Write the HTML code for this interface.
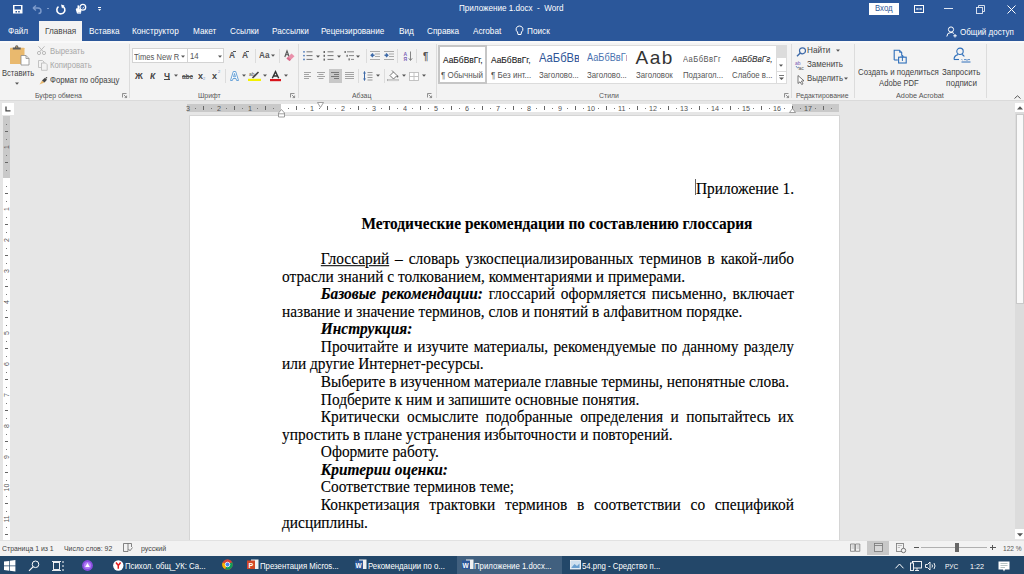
<!DOCTYPE html>
<html><head><meta charset="utf-8">
<style>
*{margin:0;padding:0;box-sizing:border-box}
html,body{width:1024px;height:574px;overflow:hidden;background:#e6e6e6;font-family:"Liberation Sans",sans-serif}
.a{position:absolute}
.t{position:absolute;white-space:pre;line-height:1}
.ln{position:absolute;left:282px;width:512px;font-family:"Liberation Serif",serif;font-size:15.4px;color:#000;-webkit-text-stroke:0.12px #000;white-space:nowrap;line-height:17.57px;height:17.57px;transform:scaleY(1.04);transform-origin:50% 60%}
.j{text-align:justify;text-align-last:justify}
svg{overflow:visible}
</style></head><body>

<div class="a" style="left:0px;top:0px;width:1024px;height:41px;background:#2b579a;"></div>
<svg class="a" style="left:12px;top:4px" width="12" height="11" viewBox="0 0 12 11"><rect x="1" y="1" width="9.5" height="8.5" fill="#fff"/><rect x="2.5" y="2" width="6.5" height="3.5" fill="#2b579a"/><rect x="3.5" y="7" width="1.5" height="1.5" fill="#2b579a"/><rect x="6.2" y="7" width="1.5" height="1.5" fill="#2b579a"/></svg>
<svg class="a" style="left:31px;top:4px" width="12" height="11" viewBox="0 0 12 11"><path d="M2 4 L5 1.5 M2 4 L5 6.5 M2 4 H7 Q10 4 10 7 Q10 9.5 7.5 9.5" stroke="#7d9bcb" stroke-width="1.4" fill="none"/></svg>
<div class="a" style="left:46.5px;top:8px;width:2px;height:1px;background:#7d9bcb;"></div>
<svg class="a" style="left:55px;top:4px" width="12" height="11" viewBox="0 0 12 11"><path d="M7.5 2.2 A4 4 0 1 1 3.5 2.6" stroke="#fff" stroke-width="1.6" fill="none"/><path d="M6 0.5 L9.5 1.5 L7 4.5 Z" fill="#fff"/></svg>
<svg class="a" style="left:75px;top:3px" width="12" height="12" viewBox="0 0 12 12"><circle cx="7.8" cy="4.3" r="2.9" fill="none" stroke="#fff" stroke-width="1.3"/><path d="M7 4.6 L7.8 5.4 L9.2 3.6" stroke="#fff" stroke-width="0.7" fill="none"/><path d="M0.8 6.5 Q0.8 5 2.5 5.3 L2.5 2.6 Q3.5 1.8 4.2 2.8 V6 L5.5 6.3 Q6.5 6.8 6.3 8 L6 10.5 H2 Z" fill="#fff"/><rect x="2.8" y="9" width="3" height="1.5" fill="#c9d5ea"/></svg>
<div class="a" style="left:98px;top:7px;width:3.2px;height:0.9px;background:#fff;"></div>
<svg class="a" style="left:98px;top:8.5px" width="3.2" height="2" viewBox="0 0 3.2 2"><path d="M0 0 H3.2 L1.6 2 Z" fill="#fff"/></svg>
<div class="t" style="left:459.0px;top:3.96px;font-size:8.91px;color:#fff;transform:scaleX(0.9091);transform-origin:0 0;">Приложение 1.docx  -  Word</div>
<div class="a" style="left:869px;top:2.5px;width:30px;height:12px;background:#fff;"></div>
<div class="t" style="left:875.0px;top:4.44px;font-size:8.58px;color:#2b579a;transform:scaleX(0.9091);transform-origin:0 0;">Вход</div>
<svg class="a" style="left:914px;top:5px" width="10" height="8" viewBox="0 0 10 8"><rect x="0.5" y="0.5" width="9" height="7" fill="none" stroke="#fff"/><path d="M2.5 4 H7.5 M3.5 3 L2.5 4 L3.5 5 M6.5 3 L7.5 4 L6.5 5" stroke="#fff" stroke-width="0.8" fill="none"/></svg>
<div class="a" style="left:944px;top:8px;width:9px;height:1px;background:#dfe6f2;"></div>
<svg class="a" style="left:976px;top:4.5px" width="9" height="9" viewBox="0 0 9 9"><rect x="0.5" y="2.5" width="6" height="6" fill="none" stroke="#e6ecf5" stroke-width="0.9"/><path d="M2.5 2.5 V0.5 H8.5 V6.5 H6.5" fill="none" stroke="#e6ecf5" stroke-width="0.9"/></svg>
<svg class="a" style="left:1007px;top:4.5px" width="9" height="9" viewBox="0 0 9 9"><path d="M0.5 0.5 L8.5 8.5 M8.5 0.5 L0.5 8.5" stroke="#fff" stroke-width="1"/></svg>
<div class="a" style="left:38.6px;top:21px;width:43.2px;height:20px;background:#f3f3f3;"></div>
<div class="t" style="left:7.8px;top:26.66px;font-size:9.02px;color:#fff;transform:scaleX(0.9091);transform-origin:0 0;">Файл</div>
<div class="t" style="left:89.0px;top:26.66px;font-size:9.02px;color:#fff;transform:scaleX(0.9091);transform-origin:0 0;">Вставка</div>
<div class="t" style="left:132.0px;top:26.66px;font-size:9.02px;color:#fff;transform:scaleX(0.9091);transform-origin:0 0;">Конструктор</div>
<div class="t" style="left:193.0px;top:26.66px;font-size:9.02px;color:#fff;transform:scaleX(0.9091);transform-origin:0 0;">Макет</div>
<div class="t" style="left:229.5px;top:26.66px;font-size:9.02px;color:#fff;transform:scaleX(0.9091);transform-origin:0 0;">Ссылки</div>
<div class="t" style="left:271.8px;top:26.66px;font-size:9.02px;color:#fff;transform:scaleX(0.9091);transform-origin:0 0;">Рассылки</div>
<div class="t" style="left:321.0px;top:26.66px;font-size:9.02px;color:#fff;transform:scaleX(0.9091);transform-origin:0 0;">Рецензирование</div>
<div class="t" style="left:399.0px;top:26.66px;font-size:9.02px;color:#fff;transform:scaleX(0.9091);transform-origin:0 0;">Вид</div>
<div class="t" style="left:427.0px;top:26.66px;font-size:9.02px;color:#fff;transform:scaleX(0.9091);transform-origin:0 0;">Справка</div>
<div class="t" style="left:472.5px;top:26.66px;font-size:9.02px;color:#fff;transform:scaleX(0.9091);transform-origin:0 0;">Acrobat</div>
<div class="t" style="left:527.0px;top:26.66px;font-size:9.02px;color:#fff;transform:scaleX(0.9091);transform-origin:0 0;">Поиск</div>
<div class="t" style="left:45.0px;top:26.66px;font-size:9.02px;color:#444;transform:scaleX(0.9091);transform-origin:0 0;">Главная</div>
<svg class="a" style="left:515px;top:25px" width="9" height="11" viewBox="0 0 9 11"><path d="M4.5 1 A3.3 3.3 0 0 1 6.5 7 L6 9.5 H3 L2.5 7 A3.3 3.3 0 0 1 4.5 1 Z" fill="none" stroke="#fff" stroke-width="1"/></svg>
<svg class="a" style="left:946px;top:26px" width="12" height="12" viewBox="0 0 12 12"><circle cx="5" cy="3.5" r="2.6" fill="none" stroke="#fff"/><path d="M0.8 10.5 Q1 6.5 5 6.5 Q7 6.5 8 7.5" fill="none" stroke="#fff"/><path d="M9 8 V11.5 M7.3 9.8 H10.8" stroke="#fff"/></svg>
<div class="t" style="left:960.0px;top:28.05px;font-size:8.80px;color:#fff;transform:scaleX(0.9091);transform-origin:0 0;">Общий доступ</div>
<div class="a" style="left:0px;top:41px;width:1024px;height:60px;background:#f3f3f3;"></div>
<div class="a" style="left:0px;top:41px;width:1024px;height:1.5px;background:#f9f9f9;"></div>
<div class="a" style="left:0px;top:100px;width:1024px;height:1px;background:#dadada;"></div>
<svg class="a" style="left:9px;top:45px" width="21" height="21" viewBox="0 0 21 21"><rect x="1" y="2.7" width="14.5" height="16.3" rx="0.6" fill="#e9b96e"/><path d="M3.8 4.6 V2.6 H6 Q6.2 0.3 7.75 0.3 Q9.3 0.3 9.5 2.6 H11.7 V4.6 Z" fill="#5a5a5a"/><circle cx="7.75" cy="1.9" r="0.7" fill="#e9b96e"/><path d="M12 10.5 H17 L20 13.5 V20 H12 Z" fill="#fff" stroke="#8a8a8a" stroke-width="0.8"/><path d="M17 10.5 V13.5 H20" fill="none" stroke="#8a8a8a" stroke-width="0.8"/></svg>
<div class="t" style="left:1.6px;top:68.82px;font-size:8.36px;color:#444;transform:scaleX(0.9091);transform-origin:0 0;">Вставить</div>
<svg class="a" style="left:14.7px;top:81.8px" width="4" height="3" viewBox="0 0 4 3"><path d="M0 0.5 H4 L2 2.7 Z" fill="#555"/></svg>
<svg class="a" style="left:37px;top:45.5px" width="9" height="9" viewBox="0 0 9 9"><circle cx="2" cy="7" r="1.6" fill="none" stroke="#b4b4b4" stroke-width="0.9"/><circle cx="7" cy="7" r="1.6" fill="none" stroke="#b4b4b4" stroke-width="0.9"/><path d="M2.8 5.6 L7.5 0.3 M6.2 5.6 L1.5 0.3" stroke="#b4b4b4" stroke-width="0.9"/></svg>
<div class="t" style="left:49.7px;top:47.08px;font-size:8.53px;color:#a8a8a8;transform:scaleX(0.9091);transform-origin:0 0;">Вырезать</div>
<svg class="a" style="left:37.5px;top:60px" width="10" height="11" viewBox="0 0 10 11"><path d="M0.5 0.5 H4.5 L6 2 V7.5 H0.5 Z" fill="none" stroke="#bdbdbd" stroke-width="0.9"/><path d="M3.5 3 H7.5 L9.2 4.7 V10.3 H3.5 Z" fill="#f3f3f3" stroke="#bdbdbd" stroke-width="0.9"/></svg>
<div class="t" style="left:49.7px;top:61.38px;font-size:8.53px;color:#a8a8a8;transform:scaleX(0.9091);transform-origin:0 0;">Копировать</div>
<svg class="a" style="left:38.5px;top:76.5px" width="9" height="8" viewBox="0 0 9 8"><path d="M0.5 7.5 L3 3.5 L5.5 5.5 Z" fill="#e9b96e"/><path d="M3 3.5 L6 0.8 L8 2.8 L5.5 5.5 Z" fill="#444"/><circle cx="7.5" cy="0.8" r="0.8" fill="#444"/></svg>
<div class="t" style="left:49.5px;top:76.28px;font-size:8.53px;color:#444;transform:scaleX(0.9091);transform-origin:0 0;">Формат по образцу</div>
<div class="t" style="left:34.9px;top:91.58px;font-size:7.59px;color:#555;transform:scaleX(0.9091);transform-origin:0 0;">Буфер обмена</div>
<svg class="a" style="left:121.5px;top:92.5px" width="5" height="5" viewBox="0 0 5 5"><path d="M0.5 4.5 V0.5 H4.5" stroke="#777" stroke-width="0.8" fill="none"/><path d="M1.8 1.8 L4.6 4.6 M4.6 2.6 V4.6 H2.6" stroke="#777" stroke-width="0.8" fill="none"/></svg>
<div class="a" style="left:129.3px;top:44px;width:1px;height:54px;background:#dcdcdc;"></div>
<div class="a" style="left:131.7px;top:48.4px;width:92px;height:14.6px;background:#fff;border:1px solid #d3d3d3"></div>
<div class="a" style="left:187.1px;top:48.4px;width:1px;height:14.6px;background:#d3d3d3;"></div>
<div class="t" style="left:134.0px;top:52.52px;font-size:8.36px;color:#555;transform:scaleX(0.9091);transform-origin:0 0;">Times New R</div>
<svg class="a" style="left:181.2px;top:54.8px" width="4" height="3" viewBox="0 0 4 3"><path d="M0 0.5 H4 L2 2.7 Z" fill="#555"/></svg>
<div class="t" style="left:190.0px;top:52.34px;font-size:8.58px;color:#555;transform:scaleX(0.9091);transform-origin:0 0;">14</div>
<svg class="a" style="left:217.6px;top:54.8px" width="4" height="3" viewBox="0 0 4 3"><path d="M0 0.5 H4 L2 2.7 Z" fill="#555"/></svg>
<div class="t" style="left:228.5px;top:51.28px;font-size:9.24px;color:#555;transform:scaleX(0.9091);transform-origin:0 0;font-weight:bold">A</div>
<div class="a" style="left:233px;top:51px;width:2.5px;height:0.9px;background:#555;"></div>
<div class="t" style="left:241.5px;top:51.28px;font-size:9.24px;color:#555;transform:scaleX(0.9091);transform-origin:0 0;font-weight:bold">A</div>
<div class="a" style="left:246px;top:51px;width:2.5px;height:0.9px;background:#555;"></div>
<div class="a" style="left:254.6px;top:49px;width:1px;height:14px;background:#dcdcdc;"></div>
<div class="t" style="left:259.2px;top:51.46px;font-size:9.02px;color:#555;transform:scaleX(0.9091);transform-origin:0 0;font-weight:bold">Aa</div>
<svg class="a" style="left:270.5px;top:54.2px" width="4" height="3" viewBox="0 0 4 3"><path d="M0 0.5 H4 L2 2.7 Z" fill="#555"/></svg>
<div class="a" style="left:279.1px;top:49px;width:1px;height:14px;background:#dcdcdc;"></div>
<svg class="a" style="left:284px;top:49.5px" width="11" height="11" viewBox="0 0 11 11"><path d="M0.8 7 L3 0.8 L5.2 7 M1.6 4.8 H4.4" stroke="#555" stroke-width="1.1" fill="none"/><path d="M2.5 8.5 L7.5 3.5 L10.5 6.3 L5.5 11 Z" fill="#e990aa"/><path d="M2.5 8.5 L4 7 L7 9.8 L5.5 11 Z" fill="#d96a8a"/></svg>
<div class="t" style="left:134.8px;top:71.19px;font-size:9.46px;color:#444;transform:scaleX(0.9091);transform-origin:0 0;font-weight:bold">Ж</div>
<div class="t" style="left:149.7px;top:71.19px;font-size:9.46px;color:#444;transform:scaleX(0.9091);transform-origin:0 0;font-weight:bold;font-style:italic">К</div>
<div class="t" style="left:163.6px;top:71.19px;font-size:9.46px;color:#444;transform:scaleX(0.9091);transform-origin:0 0;font-weight:bold">Ч</div>
<div class="a" style="left:163.6px;top:79.3px;width:6px;height:0.9px;background:#444;"></div>
<svg class="a" style="left:174.3px;top:74.2px" width="4" height="3" viewBox="0 0 4 3"><path d="M0 0.5 H4 L2 2.7 Z" fill="#555"/></svg>
<div class="t" style="left:182.2px;top:72.84px;font-size:7.04px;color:#555;transform:scaleX(0.9091);transform-origin:0 0;font-weight:bold">abc</div>
<div class="a" style="left:182px;top:75.5px;width:11px;height:0.9px;background:#555;"></div>
<div class="t" style="left:197.8px;top:70.82px;font-size:9.90px;color:#444;transform:scaleX(0.9091);transform-origin:0 0;font-weight:bold">x</div>
<div class="t" style="left:203.2px;top:77.28px;font-size:4.40px;color:#6a8cc0;transform:scaleX(0.9091);transform-origin:0 0;">2</div>
<div class="t" style="left:211.8px;top:70.82px;font-size:9.90px;color:#444;transform:scaleX(0.9091);transform-origin:0 0;font-weight:bold">x</div>
<div class="t" style="left:217.5px;top:69.78px;font-size:4.40px;color:#6a8cc0;transform:scaleX(0.9091);transform-origin:0 0;">2</div>
<div class="a" style="left:225px;top:69px;width:1px;height:14px;background:#dcdcdc;"></div>
<svg class="a" style="left:229.5px;top:70.5px" width="9" height="10" viewBox="0 0 9 10"><path d="M0.5 9.5 L3.3 0.5 H5.7 L8.5 9.5 H6.6 L6 7.5 H3 L2.4 9.5 Z M3.5 5.8 H5.5 L4.5 2.5 Z" fill="#fff" stroke="#5b9bd5" stroke-width="0.9" stroke-linejoin="round"/></svg>
<svg class="a" style="left:241.6px;top:74.2px" width="4" height="3" viewBox="0 0 4 3"><path d="M0 0.5 H4 L2 2.7 Z" fill="#555"/></svg>
<svg class="a" style="left:248px;top:70.5px" width="14" height="10" viewBox="0 0 14 10"><text x="1" y="5" font-family="Liberation Sans" font-size="5" fill="#555">ab</text><path d="M4.5 7 L10.5 1" stroke="#444" stroke-width="1.6"/><rect x="0" y="7.8" width="13" height="2.2" fill="#f4f100"/></svg>
<svg class="a" style="left:262.7px;top:74.2px" width="4" height="3" viewBox="0 0 4 3"><path d="M0 0.5 H4 L2 2.7 Z" fill="#555"/></svg>
<svg class="a" style="left:270px;top:70.5px" width="12" height="11" viewBox="0 0 12 11"><path d="M2.3 7.2 L5.5 0.7 L8.7 7.2 M3.4 5 H7.6" stroke="#333" stroke-width="1.4" fill="none"/><rect x="0" y="8" width="11" height="2.2" fill="#d8131a"/></svg>
<svg class="a" style="left:283.6px;top:74.2px" width="4" height="3" viewBox="0 0 4 3"><path d="M0 0.5 H4 L2 2.7 Z" fill="#555"/></svg>
<div class="t" style="left:197.6px;top:92.08px;font-size:7.59px;color:#555;transform:scaleX(0.9091);transform-origin:0 0;">Шрифт</div>
<svg class="a" style="left:290px;top:92.5px" width="5" height="5" viewBox="0 0 5 5"><path d="M0.5 4.5 V0.5 H4.5" stroke="#777" stroke-width="0.8" fill="none"/><path d="M1.8 1.8 L4.6 4.6 M4.6 2.6 V4.6 H2.6" stroke="#777" stroke-width="0.8" fill="none"/></svg>
<div class="a" style="left:297.6px;top:44px;width:1px;height:54px;background:#dcdcdc;"></div>
<svg class="a" style="left:302.5px;top:51px" width="11" height="10" viewBox="0 0 11 10"><circle cx="1" cy="0.8" r="0.9" fill="#4a78b8"/><circle cx="1" cy="4.6" r="0.9" fill="#4a78b8"/><circle cx="1" cy="8.4" r="0.9" fill="#4a78b8"/><rect x="3.5" y="0.3" width="6" height="1" fill="#777"/><rect x="3.5" y="4.1" width="6" height="1" fill="#777"/><rect x="3.5" y="7.9" width="6" height="1" fill="#777"/></svg>
<svg class="a" style="left:315.7px;top:54.7px" width="4" height="3" viewBox="0 0 4 3"><path d="M0 0.5 H4 L2 2.7 Z" fill="#555"/></svg>
<svg class="a" style="left:322.5px;top:51px" width="11" height="10" viewBox="0 0 11 10"><rect x="0.5" y="0" width="1.5" height="2" fill="#666"/><rect x="0.5" y="3.8" width="1.5" height="2" fill="#666"/><rect x="0.5" y="7.6" width="1.5" height="2" fill="#666"/><rect x="4.5" y="0.3" width="6" height="1" fill="#777"/><rect x="4.5" y="4.1" width="6" height="1" fill="#777"/><rect x="4.5" y="7.9" width="6" height="1" fill="#777"/></svg>
<svg class="a" style="left:336.6px;top:54.7px" width="4" height="3" viewBox="0 0 4 3"><path d="M0 0.5 H4 L2 2.7 Z" fill="#555"/></svg>
<svg class="a" style="left:344px;top:51px" width="11" height="10" viewBox="0 0 11 10"><rect x="0.5" y="0" width="1.3" height="2" fill="#666"/><rect x="2.5" y="3.8" width="1.3" height="2" fill="#666"/><rect x="4.5" y="7.4" width="1.3" height="2" fill="#666"/><rect x="3" y="0.3" width="7" height="1" fill="#888"/><rect x="5" y="4.1" width="5" height="1" fill="#888"/><rect x="7" y="7.9" width="3" height="1" fill="#888"/></svg>
<svg class="a" style="left:356.4px;top:54.7px" width="4" height="3" viewBox="0 0 4 3"><path d="M0 0.5 H4 L2 2.7 Z" fill="#555"/></svg>
<div class="a" style="left:365.5px;top:49px;width:1px;height:14px;background:#dcdcdc;"></div>
<svg class="a" style="left:369.5px;top:51px" width="10" height="10" viewBox="0 0 10 10"><rect x="0" y="0" width="10" height="1" fill="#aaa"/><rect x="5" y="2.5" width="5" height="1" fill="#aaa"/><rect x="5" y="5" width="5" height="1" fill="#aaa"/><rect x="0" y="8" width="10" height="1" fill="#aaa"/><path d="M4.5 4.2 H1.3 M3 2.5 L1.2 4.2 L3 6" stroke="#3e6aa8" stroke-width="1.4" fill="none"/></svg>
<svg class="a" style="left:383.5px;top:51px" width="10" height="10" viewBox="0 0 10 10"><rect x="0" y="0" width="10" height="1" fill="#aaa"/><rect x="5" y="2.5" width="5" height="1" fill="#aaa"/><rect x="5" y="5" width="5" height="1" fill="#aaa"/><rect x="0" y="8" width="10" height="1" fill="#aaa"/><path d="M0.5 4.2 H3.7 M2 2.5 L3.8 4.2 L2 6" stroke="#3e6aa8" stroke-width="1.4" fill="none"/></svg>
<div class="a" style="left:397.3px;top:49px;width:1px;height:14px;background:#dcdcdc;"></div>
<svg class="a" style="left:402.5px;top:50.5px" width="10" height="11" viewBox="0 0 10 11"><text x="0.5" y="4.8" font-family="Liberation Sans" font-size="5" font-weight="bold" fill="#7a62b5">A</text><text x="0.5" y="9.8" font-family="Liberation Sans" font-size="5" font-weight="bold" fill="#7a62b5">Я</text><path d="M7.5 0.5 V9 M5.8 7.3 L7.5 9.5 L9.2 7.3" stroke="#777" stroke-width="0.9" fill="none"/></svg>
<div class="a" style="left:416.4px;top:49px;width:1px;height:14px;background:#dcdcdc;"></div>
<div class="t" style="left:422.5px;top:51.85px;font-size:10.45px;color:#555;transform:scaleX(0.9091);transform-origin:0 0;font-weight:bold">¶</div>
<div class="a" style="left:328.6px;top:68.5px;width:13.8px;height:14.2px;background:#c8c8c8;"></div>
<svg class="a" style="left:304px;top:72px" width="8" height="7" viewBox="0 0 8 7"><rect x="0" y="0" width="7" height="1" fill="#a3a3a3"/><rect x="0" y="2" width="5" height="1" fill="#a3a3a3"/><rect x="0" y="4" width="7" height="1" fill="#a3a3a3"/><rect x="0" y="6" width="5" height="1" fill="#a3a3a3"/></svg>
<svg class="a" style="left:317px;top:72px" width="8" height="7" viewBox="0 0 8 7"><rect x="0" y="0" width="8" height="1" fill="#a3a3a3"/><rect x="1.5" y="2" width="5" height="1" fill="#a3a3a3"/><rect x="0" y="4" width="8" height="1" fill="#a3a3a3"/><rect x="1.5" y="6" width="5" height="1" fill="#a3a3a3"/></svg>
<svg class="a" style="left:331px;top:72px" width="9" height="7" viewBox="0 0 9 7"><rect x="0" y="0" width="8" height="1" fill="#777"/><rect x="3" y="2" width="5" height="1" fill="#777"/><rect x="0" y="4" width="8" height="1" fill="#777"/><rect x="3" y="6" width="5" height="1" fill="#777"/></svg>
<svg class="a" style="left:345px;top:72px" width="9" height="7" viewBox="0 0 9 7"><rect x="0" y="0" width="9" height="1" fill="#a3a3a3"/><rect x="0" y="2" width="9" height="1" fill="#a3a3a3"/><rect x="0" y="4" width="9" height="1" fill="#a3a3a3"/><rect x="0" y="6" width="9" height="1" fill="#a3a3a3"/></svg>
<div class="a" style="left:358.1px;top:69px;width:1px;height:14px;background:#dcdcdc;"></div>
<svg class="a" style="left:362.5px;top:70.5px" width="10" height="11" viewBox="0 0 10 11"><path d="M1.5 0.5 V9.5" stroke="#3e6aa8" stroke-width="1"/><path d="M0 2.5 L1.5 0.3 L3 2.5 Z M0 7.5 L1.5 9.7 L3 7.5 Z" fill="#3e6aa8"/><rect x="4.5" y="1" width="5" height="1" fill="#999"/><rect x="4.5" y="3.5" width="5" height="1" fill="#999"/><rect x="4.5" y="6" width="5" height="1" fill="#999"/><rect x="4.5" y="8.5" width="5" height="1" fill="#999"/></svg>
<svg class="a" style="left:375.5px;top:74.2px" width="4" height="3" viewBox="0 0 4 3"><path d="M0 0.5 H4 L2 2.7 Z" fill="#555"/></svg>
<div class="a" style="left:383.5px;top:69px;width:1px;height:14px;background:#dcdcdc;"></div>
<svg class="a" style="left:386.5px;top:70px" width="13" height="11" viewBox="0 0 13 11"><path d="M3 5.5 L6.5 2 L10 5.5 L6.5 9 Z" fill="#fff" stroke="#666" stroke-width="0.9"/><path d="M6.5 2 L5 0.5" stroke="#666" stroke-width="0.9"/><circle cx="10.5" cy="6.5" r="0.9" fill="#666"/><rect x="0.5" y="9.5" width="11" height="1.3" fill="#fff" stroke="#999" stroke-width="0.5"/></svg>
<svg class="a" style="left:401.6px;top:74.2px" width="4" height="3" viewBox="0 0 4 3"><path d="M0 0.5 H4 L2 2.7 Z" fill="#555"/></svg>
<svg class="a" style="left:409px;top:71.5px" width="10" height="9" viewBox="0 0 10 9"><rect x="0.5" y="0.5" width="9" height="8" fill="#fff" stroke="#bdbdbd" stroke-width="0.9"/><path d="M5 0.5 V8.5 M0.5 4.5 H9.5" stroke="#bdbdbd" stroke-width="0.9"/></svg>
<svg class="a" style="left:422px;top:74.2px" width="4" height="3" viewBox="0 0 4 3"><path d="M0 0.5 H4 L2 2.7 Z" fill="#555"/></svg>
<div class="t" style="left:351.7px;top:92.08px;font-size:7.59px;color:#555;transform:scaleX(0.9091);transform-origin:0 0;">Абзац</div>
<svg class="a" style="left:427px;top:92.5px" width="5" height="5" viewBox="0 0 5 5"><path d="M0.5 4.5 V0.5 H4.5" stroke="#777" stroke-width="0.8" fill="none"/><path d="M1.8 1.8 L4.6 4.6 M4.6 2.6 V4.6 H2.6" stroke="#777" stroke-width="0.8" fill="none"/></svg>
<div class="a" style="left:436.2px;top:44px;width:1px;height:54px;background:#dcdcdc;"></div>
<div class="a" style="left:437.8px;top:44.9px;width:349px;height:39.2px;background:#fff;border:1px solid #dcdcdc"></div>
<div class="a" style="left:438.3px;top:45.4px;width:48.5px;height:38.2px;background:transparent;border:2px solid #c6c6c6"></div>
<div class="t" style="left:443.0px;top:55.69px;font-size:8.40px;color:#222;-webkit-text-stroke:0.1px #222">АаБбВвГг,</div>
<div class="t" style="left:441.0px;top:70.55px;font-size:8.80px;color:#555;transform:scaleX(0.9091);transform-origin:0 0;">¶ Обычный</div>
<div class="t" style="left:491.0px;top:55.69px;font-size:8.40px;color:#222;-webkit-text-stroke:0.1px #222">АаБбВвГг,</div>
<div class="t" style="left:491.0px;top:70.55px;font-size:8.80px;color:#555;transform:scaleX(0.9091);transform-origin:0 0;">¶ Без инт...</div>
<div class="a" style="left:539px;top:49px;width:39.5px;height:16px;overflow:hidden">
<div class="t" style="left:0.0px;top:3.07px;font-size:12.32px;color:#2e5597;transform:scaleX(0.9091);transform-origin:0 0;">АаБбВвГг</div>
</div>
<div class="t" style="left:539.0px;top:70.74px;font-size:8.58px;color:#555;transform:scaleX(0.9091);transform-origin:0 0;">Заголово...</div>
<div class="a" style="left:587px;top:49px;width:39.5px;height:16px;overflow:hidden">
<div class="t" style="left:0.0px;top:3.93px;font-size:10.12px;color:#4a72b0;transform:scaleX(0.9091);transform-origin:0 0;">АаБбВвГг</div>
</div>
<div class="t" style="left:587.0px;top:70.74px;font-size:8.58px;color:#555;transform:scaleX(0.9091);transform-origin:0 0;">Заголово...</div>
<div class="t" style="left:635.5px;top:48.22px;font-size:19.00px;color:#333;letter-spacing:1.5px">Aab</div>
<div class="t" style="left:636.0px;top:70.74px;font-size:8.58px;color:#555;transform:scaleX(0.9091);transform-origin:0 0;">Заголовок</div>
<div class="a" style="left:683px;top:52px;width:41px;height:12px;overflow:hidden">
<div class="t" style="left:0.0px;top:2.92px;font-size:8.36px;color:#555;transform:scaleX(0.9091);transform-origin:0 0;letter-spacing:0.5px">АаБбВвГг</div>
</div>
<div class="t" style="left:683.0px;top:70.74px;font-size:8.58px;color:#555;transform:scaleX(0.9091);transform-origin:0 0;">Подзагол...</div>
<div class="t" style="left:732.0px;top:55.56px;font-size:8.20px;color:#333;font-style:italic;-webkit-text-stroke:0.1px #333">АаБбВвГг,</div>
<div class="t" style="left:732.0px;top:70.74px;font-size:8.58px;color:#555;transform:scaleX(0.9091);transform-origin:0 0;">Слабое в...</div>
<div class="a" style="left:776.4px;top:44.9px;width:10.2px;height:39.2px;background:#fff;border:1px solid #dcdcdc"></div>
<div class="a" style="left:777.4px;top:45.9px;width:8.2px;height:12.6px;background:#dcdcdc;"></div>
<svg class="a" style="left:779.4px;top:63.5px" width="4" height="3" viewBox="0 0 4 3"><path d="M0 0.5 H4 L2 2.7 Z" fill="#555"/></svg>
<div class="a" style="left:777.4px;top:71px;width:8.2px;height:1px;background:#dcdcdc;"></div>
<svg class="a" style="left:779px;top:74.5px" width="5" height="6" viewBox="0 0 5 6"><path d="M0 0.5 H5" stroke="#555" stroke-width="0.8"/><path d="M0 2.5 H5 L2.5 5 Z" fill="#555"/></svg>
<div class="t" style="left:599.0px;top:91.58px;font-size:7.59px;color:#555;transform:scaleX(0.9091);transform-origin:0 0;">Стили</div>
<svg class="a" style="left:783.5px;top:92.5px" width="5" height="5" viewBox="0 0 5 5"><path d="M0.5 4.5 V0.5 H4.5" stroke="#777" stroke-width="0.8" fill="none"/><path d="M1.8 1.8 L4.6 4.6 M4.6 2.6 V4.6 H2.6" stroke="#777" stroke-width="0.8" fill="none"/></svg>
<div class="a" style="left:790.8px;top:44px;width:1px;height:54px;background:#dcdcdc;"></div>
<svg class="a" style="left:795.5px;top:46.5px" width="11" height="10" viewBox="0 0 11 10"><circle cx="6.5" cy="3.8" r="3" fill="none" stroke="#3e6aa8" stroke-width="1.2"/><path d="M4.3 6 L1 9.3" stroke="#3e6aa8" stroke-width="1.4"/></svg>
<div class="t" style="left:807.0px;top:45.86px;font-size:9.02px;color:#444;transform:scaleX(0.9091);transform-origin:0 0;">Найти</div>
<svg class="a" style="left:835.5px;top:49.0px" width="4" height="3" viewBox="0 0 4 3"><path d="M0 0.5 H4 L2 2.7 Z" fill="#555"/></svg>
<svg class="a" style="left:795px;top:60px" width="12" height="11" viewBox="0 0 12 11"><text x="0" y="4.5" font-family="Liberation Sans" font-size="5" fill="#7a62b5">ab</text><text x="3.5" y="10" font-family="Liberation Sans" font-size="5" fill="#555">ac</text><path d="M1 6 L2.5 8 L4 7" stroke="#3e6aa8" stroke-width="0.7" fill="none"/></svg>
<div class="t" style="left:807.0px;top:60.05px;font-size:8.80px;color:#444;transform:scaleX(0.9091);transform-origin:0 0;">Заменить</div>
<svg class="a" style="left:797px;top:74.5px" width="9" height="10" viewBox="0 0 9 10"><path d="M1 0.5 L1 8.5 L3 6.8 L4.7 9.5 L6 8.8 L4.4 6.1 L7 5.8 Z" fill="#fff" stroke="#555" stroke-width="0.8"/></svg>
<div class="t" style="left:807.0px;top:74.44px;font-size:8.58px;color:#444;transform:scaleX(0.9091);transform-origin:0 0;">Выделить</div>
<svg class="a" style="left:844px;top:77.0px" width="4" height="3" viewBox="0 0 4 3"><path d="M0 0.5 H4 L2 2.7 Z" fill="#555"/></svg>
<div class="t" style="left:795.5px;top:92.08px;font-size:7.59px;color:#555;transform:scaleX(0.9091);transform-origin:0 0;">Редактирование</div>
<div class="a" style="left:853.8px;top:44px;width:1px;height:54px;background:#dcdcdc;"></div>
<svg class="a" style="left:892.5px;top:48.5px" width="15" height="15" viewBox="0 0 15 15"><path d="M1.2 11 V1.2 H6.5 L8.7 3.4 V6.5" fill="none" stroke="#2f6fba" stroke-width="1.1"/><path d="M1.2 11 H4.8" stroke="#2f6fba" stroke-width="1.1"/><path d="M6.5 1.2 V3.4 H8.7" fill="none" stroke="#2f6fba" stroke-width="0.8"/><rect x="5.6" y="8.2" width="7.6" height="5.8" fill="none" stroke="#2f6fba" stroke-width="1.1"/><path d="M9.4 12 V6.2 M7.8 7.8 L9.4 6.2 L11 7.8" fill="none" stroke="#2f6fba" stroke-width="1"/></svg>
<div class="t" style="left:857.8px;top:68.14px;font-size:8.69px;color:#444;transform:scaleX(0.9091);transform-origin:0 0;">Создать и поделиться</div>
<div class="t" style="left:879.0px;top:79.33px;font-size:8.47px;color:#444;transform:scaleX(0.9091);transform-origin:0 0;">Adobe PDF</div>
<svg class="a" style="left:952.5px;top:47px" width="19" height="17" viewBox="0 0 19 17"><circle cx="7" cy="4.3" r="3.2" fill="none" stroke="#2f6fba" stroke-width="1.1"/><path d="M1 12.5 Q1.2 8.3 5 7.6 M9 7.6 Q10.5 8 11.3 9.5" fill="none" stroke="#2f6fba" stroke-width="1.1"/><path d="M1 12.5 H6" stroke="#2f6fba" stroke-width="1.1"/><path d="M8.5 15 H17.5" stroke="#2f6fba" stroke-width="1"/><path d="M8.5 12.5 L9.5 13 M11 12.8 Q12 12 13 12.8 Q14 13.5 15 12.8 Q16 12 17 12.8" stroke="#2f6fba" stroke-width="0.8" fill="none"/></svg>
<div class="t" style="left:942.0px;top:68.14px;font-size:8.69px;color:#444;transform:scaleX(0.9091);transform-origin:0 0;">Запросить</div>
<div class="t" style="left:946.0px;top:78.96px;font-size:8.91px;color:#444;transform:scaleX(0.9091);transform-origin:0 0;">подписи</div>
<div class="t" style="left:896.0px;top:91.70px;font-size:8.03px;color:#555;transform:scaleX(0.9091);transform-origin:0 0;">Adobe Acrobat</div>
<div class="a" style="left:985.7px;top:44px;width:1px;height:54px;background:#dcdcdc;"></div>
<svg class="a" style="left:1013.5px;top:94.5px" width="7" height="4" viewBox="0 0 7 4"><path d="M0.5 3.5 L3.5 0.8 L6.5 3.5" stroke="#444" stroke-width="0.9" fill="none"/></svg>
<div class="a" style="left:0px;top:101px;width:1024px;height:439px;background:#e6e6e6;"></div>
<div class="a" style="left:189.9px;top:116.4px;width:649px;height:430px;background:#fff;box-shadow:0 0 0 0.8px #d2d2d2"></div>
<div class="ln" style="top:179.7px;text-align:right">Приложение 1.</div>
<div class="ln" style="top:214.8px;text-align:center;font-weight:bold;padding-left:38px">Методические рекомендации по составлению глоссария</div>
<div class="ln j" style="top:250.0px;text-indent:38.8px"><u>Глоссарий</u> – словарь узкоспециализированных терминов в какой-либо</div>
<div class="ln" style="top:267.6px">отрасли знаний с толкованием, комментариями и примерами.</div>
<div class="ln j" style="top:285.1px;text-indent:38.8px"><b><i>Базовые рекомендации:</i></b> глоссарий оформляется письменно, включает</div>
<div class="ln" style="top:302.7px">название и значение терминов, слов и понятий в алфавитном порядке.</div>
<div class="ln" style="top:320.3px;text-indent:38.8px"><b><i>Инструкция:</i></b></div>
<div class="ln j" style="top:337.8px;text-indent:38.8px">Прочитайте и изучите материалы, рекомендуемые по данному разделу</div>
<div class="ln" style="top:355.4px">или другие Интернет-ресурсы.</div>
<div class="ln" style="top:373.0px;text-indent:38.8px">Выберите в изученном материале главные термины, непонятные слова.</div>
<div class="ln" style="top:390.5px;text-indent:38.8px">Подберите к ним и запишите основные понятия.</div>
<div class="ln j" style="top:408.1px;text-indent:38.8px">Критически осмыслите подобранные определения и попытайтесь их</div>
<div class="ln" style="top:425.7px">упростить в плане устранения избыточности и повторений.</div>
<div class="ln" style="top:443.2px;text-indent:38.8px">Оформите работу.</div>
<div class="ln" style="top:460.8px;text-indent:38.8px"><b><i>Критерии оценки:</i></b></div>
<div class="ln" style="top:478.4px;text-indent:38.8px">Соответствие терминов теме;</div>
<div class="ln j" style="top:495.9px;text-indent:38.8px">Конкретизация трактовки терминов в соответствии со спецификой</div>
<div class="ln" style="top:513.5px">дисциплины.</div>
<div class="a" style="left:695.3px;top:179.4px;width:1px;height:16px;background:#666"></div>

<div class="a" style="left:187px;top:104px;width:652px;height:8.3px;background:#c9c9c9;"></div>
<div class="a" style="left:280.5px;top:104px;width:511.5px;height:8.3px;background:#fff;"></div>
<div class="t" style="left:185.7px;top:104.80px;font-size:7.92px;color:#555;transform:scaleX(0.9091);transform-origin:0 0;">3</div>
<div class="a" style="left:195.1px;top:107.6px;width:0.9px;height:1.1px;background:#777;"></div>
<div class="a" style="left:202.6px;top:106.3px;width:0.9px;height:3.6px;background:#666;"></div>
<div class="a" style="left:210.6px;top:107.6px;width:0.9px;height:1.1px;background:#777;"></div>
<div class="t" style="left:216.7px;top:104.80px;font-size:7.92px;color:#555;transform:scaleX(0.9091);transform-origin:0 0;">2</div>
<div class="a" style="left:226.1px;top:107.6px;width:0.9px;height:1.1px;background:#777;"></div>
<div class="a" style="left:233.6px;top:106.3px;width:0.9px;height:3.6px;background:#666;"></div>
<div class="a" style="left:241.6px;top:107.6px;width:0.9px;height:1.1px;background:#777;"></div>
<div class="t" style="left:247.7px;top:104.80px;font-size:7.92px;color:#555;transform:scaleX(0.9091);transform-origin:0 0;">1</div>
<div class="a" style="left:257.1px;top:107.6px;width:0.9px;height:1.1px;background:#777;"></div>
<div class="a" style="left:264.6px;top:106.3px;width:0.9px;height:3.6px;background:#666;"></div>
<div class="a" style="left:272.6px;top:107.6px;width:0.9px;height:1.1px;background:#777;"></div>
<div class="a" style="left:288.1px;top:107.6px;width:0.9px;height:1.1px;background:#777;"></div>
<div class="a" style="left:295.6px;top:106.3px;width:0.9px;height:3.6px;background:#666;"></div>
<div class="a" style="left:303.6px;top:107.6px;width:0.9px;height:1.1px;background:#777;"></div>
<div class="t" style="left:309.7px;top:104.80px;font-size:7.92px;color:#555;transform:scaleX(0.9091);transform-origin:0 0;">1</div>
<div class="a" style="left:319.1px;top:107.6px;width:0.9px;height:1.1px;background:#777;"></div>
<div class="a" style="left:326.6px;top:106.3px;width:0.9px;height:3.6px;background:#666;"></div>
<div class="a" style="left:334.6px;top:107.6px;width:0.9px;height:1.1px;background:#777;"></div>
<div class="t" style="left:340.7px;top:104.80px;font-size:7.92px;color:#555;transform:scaleX(0.9091);transform-origin:0 0;">2</div>
<div class="a" style="left:350.1px;top:107.6px;width:0.9px;height:1.1px;background:#777;"></div>
<div class="a" style="left:357.6px;top:106.3px;width:0.9px;height:3.6px;background:#666;"></div>
<div class="a" style="left:365.6px;top:107.6px;width:0.9px;height:1.1px;background:#777;"></div>
<div class="t" style="left:371.7px;top:104.80px;font-size:7.92px;color:#555;transform:scaleX(0.9091);transform-origin:0 0;">3</div>
<div class="a" style="left:381.1px;top:107.6px;width:0.9px;height:1.1px;background:#777;"></div>
<div class="a" style="left:388.6px;top:106.3px;width:0.9px;height:3.6px;background:#666;"></div>
<div class="a" style="left:396.6px;top:107.6px;width:0.9px;height:1.1px;background:#777;"></div>
<div class="t" style="left:402.7px;top:104.80px;font-size:7.92px;color:#555;transform:scaleX(0.9091);transform-origin:0 0;">4</div>
<div class="a" style="left:412.1px;top:107.6px;width:0.9px;height:1.1px;background:#777;"></div>
<div class="a" style="left:419.6px;top:106.3px;width:0.9px;height:3.6px;background:#666;"></div>
<div class="a" style="left:427.6px;top:107.6px;width:0.9px;height:1.1px;background:#777;"></div>
<div class="t" style="left:433.7px;top:104.80px;font-size:7.92px;color:#555;transform:scaleX(0.9091);transform-origin:0 0;">5</div>
<div class="a" style="left:443.1px;top:107.6px;width:0.9px;height:1.1px;background:#777;"></div>
<div class="a" style="left:450.6px;top:106.3px;width:0.9px;height:3.6px;background:#666;"></div>
<div class="a" style="left:458.6px;top:107.6px;width:0.9px;height:1.1px;background:#777;"></div>
<div class="t" style="left:464.7px;top:104.80px;font-size:7.92px;color:#555;transform:scaleX(0.9091);transform-origin:0 0;">6</div>
<div class="a" style="left:474.1px;top:107.6px;width:0.9px;height:1.1px;background:#777;"></div>
<div class="a" style="left:481.6px;top:106.3px;width:0.9px;height:3.6px;background:#666;"></div>
<div class="a" style="left:489.6px;top:107.6px;width:0.9px;height:1.1px;background:#777;"></div>
<div class="t" style="left:495.7px;top:104.80px;font-size:7.92px;color:#555;transform:scaleX(0.9091);transform-origin:0 0;">7</div>
<div class="a" style="left:505.1px;top:107.6px;width:0.9px;height:1.1px;background:#777;"></div>
<div class="a" style="left:512.6px;top:106.3px;width:0.9px;height:3.6px;background:#666;"></div>
<div class="a" style="left:520.6px;top:107.6px;width:0.9px;height:1.1px;background:#777;"></div>
<div class="t" style="left:526.7px;top:104.80px;font-size:7.92px;color:#555;transform:scaleX(0.9091);transform-origin:0 0;">8</div>
<div class="a" style="left:536.1px;top:107.6px;width:0.9px;height:1.1px;background:#777;"></div>
<div class="a" style="left:543.6px;top:106.3px;width:0.9px;height:3.6px;background:#666;"></div>
<div class="a" style="left:551.6px;top:107.6px;width:0.9px;height:1.1px;background:#777;"></div>
<div class="t" style="left:557.7px;top:104.80px;font-size:7.92px;color:#555;transform:scaleX(0.9091);transform-origin:0 0;">9</div>
<div class="a" style="left:567.1px;top:107.6px;width:0.9px;height:1.1px;background:#777;"></div>
<div class="a" style="left:574.6px;top:106.3px;width:0.9px;height:3.6px;background:#666;"></div>
<div class="a" style="left:582.6px;top:107.6px;width:0.9px;height:1.1px;background:#777;"></div>
<div class="t" style="left:586.5px;top:104.80px;font-size:7.92px;color:#555;transform:scaleX(0.9091);transform-origin:0 0;">10</div>
<div class="a" style="left:598.1px;top:107.6px;width:0.9px;height:1.1px;background:#777;"></div>
<div class="a" style="left:605.6px;top:106.3px;width:0.9px;height:3.6px;background:#666;"></div>
<div class="a" style="left:613.6px;top:107.6px;width:0.9px;height:1.1px;background:#777;"></div>
<div class="t" style="left:617.5px;top:104.80px;font-size:7.92px;color:#555;transform:scaleX(0.9091);transform-origin:0 0;">11</div>
<div class="a" style="left:629.1px;top:107.6px;width:0.9px;height:1.1px;background:#777;"></div>
<div class="a" style="left:636.6px;top:106.3px;width:0.9px;height:3.6px;background:#666;"></div>
<div class="a" style="left:644.6px;top:107.6px;width:0.9px;height:1.1px;background:#777;"></div>
<div class="t" style="left:648.5px;top:104.80px;font-size:7.92px;color:#555;transform:scaleX(0.9091);transform-origin:0 0;">12</div>
<div class="a" style="left:660.1px;top:107.6px;width:0.9px;height:1.1px;background:#777;"></div>
<div class="a" style="left:667.6px;top:106.3px;width:0.9px;height:3.6px;background:#666;"></div>
<div class="a" style="left:675.6px;top:107.6px;width:0.9px;height:1.1px;background:#777;"></div>
<div class="t" style="left:679.5px;top:104.80px;font-size:7.92px;color:#555;transform:scaleX(0.9091);transform-origin:0 0;">13</div>
<div class="a" style="left:691.1px;top:107.6px;width:0.9px;height:1.1px;background:#777;"></div>
<div class="a" style="left:698.6px;top:106.3px;width:0.9px;height:3.6px;background:#666;"></div>
<div class="a" style="left:706.6px;top:107.6px;width:0.9px;height:1.1px;background:#777;"></div>
<div class="t" style="left:710.5px;top:104.80px;font-size:7.92px;color:#555;transform:scaleX(0.9091);transform-origin:0 0;">14</div>
<div class="a" style="left:722.1px;top:107.6px;width:0.9px;height:1.1px;background:#777;"></div>
<div class="a" style="left:729.6px;top:106.3px;width:0.9px;height:3.6px;background:#666;"></div>
<div class="a" style="left:737.6px;top:107.6px;width:0.9px;height:1.1px;background:#777;"></div>
<div class="t" style="left:741.5px;top:104.80px;font-size:7.92px;color:#555;transform:scaleX(0.9091);transform-origin:0 0;">15</div>
<div class="a" style="left:753.1px;top:107.6px;width:0.9px;height:1.1px;background:#777;"></div>
<div class="a" style="left:760.6px;top:106.3px;width:0.9px;height:3.6px;background:#666;"></div>
<div class="a" style="left:768.6px;top:107.6px;width:0.9px;height:1.1px;background:#777;"></div>
<div class="t" style="left:772.5px;top:104.80px;font-size:7.92px;color:#555;transform:scaleX(0.9091);transform-origin:0 0;">16</div>
<div class="a" style="left:784.1px;top:107.6px;width:0.9px;height:1.1px;background:#777;"></div>
<div class="a" style="left:791.6px;top:106.3px;width:0.9px;height:3.6px;background:#666;"></div>
<div class="a" style="left:799.6px;top:107.6px;width:0.9px;height:1.1px;background:#777;"></div>
<div class="t" style="left:803.5px;top:104.80px;font-size:7.92px;color:#555;transform:scaleX(0.9091);transform-origin:0 0;">17</div>
<div class="a" style="left:815.1px;top:107.6px;width:0.9px;height:1.1px;background:#777;"></div>
<div class="a" style="left:822.6px;top:106.3px;width:0.9px;height:3.6px;background:#666;"></div>
<div class="a" style="left:830.6px;top:107.6px;width:0.9px;height:1.1px;background:#777;"></div>
<svg class="a" style="left:316.5px;top:101.5px" width="7" height="7" viewBox="0 0 7 7"><path d="M0.5 0.5 H6.5 L3.5 5.5 Z" fill="#fff" stroke="#888" stroke-width="0.8"/></svg>
<svg class="a" style="left:277.5px;top:108.5px" width="7" height="8.5" viewBox="0 0 7 8.5"><path d="M0.5 4 L3.5 0.5 L6.5 4 V8 H0.5 Z" fill="#fff" stroke="#888" stroke-width="0.8"/><path d="M0.5 4.8 H6.5" stroke="#888" stroke-width="0.8"/></svg>
<svg class="a" style="left:788.5px;top:108px" width="7" height="5" viewBox="0 0 7 5"><path d="M0.5 4.5 L3.5 0.5 L6.5 4.5 Z" fill="#fff" stroke="#888" stroke-width="0.8"/></svg>
<div class="a" style="left:1.5px;top:102.5px;width:12px;height:12px;background:#fff;"></div>
<svg class="a" style="left:4.5px;top:105.5px" width="6" height="6" viewBox="0 0 6 6"><path d="M1 0.5 V4.8 H5.5" stroke="#444" stroke-width="1.3" fill="none"/></svg>
<div class="a" style="left:3px;top:116.4px;width:7px;height:424px;background:#fff;"></div>
<div class="a" style="left:3px;top:116.4px;width:7px;height:61.8px;background:#c9c9c9;"></div>
<div class="a" style="left:6px;top:123.6px;width:1.1px;height:0.9px;background:#777;"></div>
<div class="a" style="left:4.8px;top:131.1px;width:3.4px;height:0.9px;background:#666;"></div>
<div class="a" style="left:6px;top:139.1px;width:1.1px;height:0.9px;background:#777;"></div>
<div class="t" style="left:2.9px;top:147.2px;font-size:7px;color:#555;transform:translate(0,-50%) rotate(-90deg);transform-origin:50% 50%;width:7px;text-align:center">1</div>
<div class="a" style="left:6px;top:154.6px;width:1.1px;height:0.9px;background:#777;"></div>
<div class="a" style="left:4.8px;top:162.1px;width:3.4px;height:0.9px;background:#666;"></div>
<div class="a" style="left:6px;top:170.1px;width:1.1px;height:0.9px;background:#777;"></div>
<div class="a" style="left:6px;top:185.6px;width:1.1px;height:0.9px;background:#777;"></div>
<div class="a" style="left:4.8px;top:193.1px;width:3.4px;height:0.9px;background:#666;"></div>
<div class="a" style="left:6px;top:201.1px;width:1.1px;height:0.9px;background:#777;"></div>
<div class="t" style="left:2.9px;top:209.2px;font-size:7px;color:#555;transform:translate(0,-50%) rotate(-90deg);transform-origin:50% 50%;width:7px;text-align:center">1</div>
<div class="a" style="left:6px;top:216.6px;width:1.1px;height:0.9px;background:#777;"></div>
<div class="a" style="left:4.8px;top:224.1px;width:3.4px;height:0.9px;background:#666;"></div>
<div class="a" style="left:6px;top:232.1px;width:1.1px;height:0.9px;background:#777;"></div>
<div class="t" style="left:2.9px;top:240.2px;font-size:7px;color:#555;transform:translate(0,-50%) rotate(-90deg);transform-origin:50% 50%;width:7px;text-align:center">2</div>
<div class="a" style="left:6px;top:247.6px;width:1.1px;height:0.9px;background:#777;"></div>
<div class="a" style="left:4.8px;top:255.1px;width:3.4px;height:0.9px;background:#666;"></div>
<div class="a" style="left:6px;top:263.1px;width:1.1px;height:0.9px;background:#777;"></div>
<div class="t" style="left:2.9px;top:271.2px;font-size:7px;color:#555;transform:translate(0,-50%) rotate(-90deg);transform-origin:50% 50%;width:7px;text-align:center">3</div>
<div class="a" style="left:6px;top:278.6px;width:1.1px;height:0.9px;background:#777;"></div>
<div class="a" style="left:4.8px;top:286.1px;width:3.4px;height:0.9px;background:#666;"></div>
<div class="a" style="left:6px;top:294.1px;width:1.1px;height:0.9px;background:#777;"></div>
<div class="t" style="left:2.9px;top:302.2px;font-size:7px;color:#555;transform:translate(0,-50%) rotate(-90deg);transform-origin:50% 50%;width:7px;text-align:center">4</div>
<div class="a" style="left:6px;top:309.6px;width:1.1px;height:0.9px;background:#777;"></div>
<div class="a" style="left:4.8px;top:317.1px;width:3.4px;height:0.9px;background:#666;"></div>
<div class="a" style="left:6px;top:325.1px;width:1.1px;height:0.9px;background:#777;"></div>
<div class="t" style="left:2.9px;top:333.2px;font-size:7px;color:#555;transform:translate(0,-50%) rotate(-90deg);transform-origin:50% 50%;width:7px;text-align:center">5</div>
<div class="a" style="left:6px;top:340.6px;width:1.1px;height:0.9px;background:#777;"></div>
<div class="a" style="left:4.8px;top:348.1px;width:3.4px;height:0.9px;background:#666;"></div>
<div class="a" style="left:6px;top:356.1px;width:1.1px;height:0.9px;background:#777;"></div>
<div class="t" style="left:2.9px;top:364.2px;font-size:7px;color:#555;transform:translate(0,-50%) rotate(-90deg);transform-origin:50% 50%;width:7px;text-align:center">6</div>
<div class="a" style="left:6px;top:371.6px;width:1.1px;height:0.9px;background:#777;"></div>
<div class="a" style="left:4.8px;top:379.1px;width:3.4px;height:0.9px;background:#666;"></div>
<div class="a" style="left:6px;top:387.1px;width:1.1px;height:0.9px;background:#777;"></div>
<div class="t" style="left:2.9px;top:395.2px;font-size:7px;color:#555;transform:translate(0,-50%) rotate(-90deg);transform-origin:50% 50%;width:7px;text-align:center">7</div>
<div class="a" style="left:6px;top:402.6px;width:1.1px;height:0.9px;background:#777;"></div>
<div class="a" style="left:4.8px;top:410.1px;width:3.4px;height:0.9px;background:#666;"></div>
<div class="a" style="left:6px;top:418.1px;width:1.1px;height:0.9px;background:#777;"></div>
<div class="t" style="left:2.9px;top:426.2px;font-size:7px;color:#555;transform:translate(0,-50%) rotate(-90deg);transform-origin:50% 50%;width:7px;text-align:center">8</div>
<div class="a" style="left:6px;top:433.6px;width:1.1px;height:0.9px;background:#777;"></div>
<div class="a" style="left:4.8px;top:441.1px;width:3.4px;height:0.9px;background:#666;"></div>
<div class="a" style="left:6px;top:449.1px;width:1.1px;height:0.9px;background:#777;"></div>
<div class="t" style="left:2.9px;top:457.2px;font-size:7px;color:#555;transform:translate(0,-50%) rotate(-90deg);transform-origin:50% 50%;width:7px;text-align:center">9</div>
<div class="a" style="left:6px;top:464.6px;width:1.1px;height:0.9px;background:#777;"></div>
<div class="a" style="left:4.8px;top:472.1px;width:3.4px;height:0.9px;background:#666;"></div>
<div class="a" style="left:6px;top:480.1px;width:1.1px;height:0.9px;background:#777;"></div>
<div class="t" style="left:2.9px;top:488.2px;font-size:7px;color:#555;transform:translate(0,-50%) rotate(-90deg);transform-origin:50% 50%;width:7px;text-align:center">10</div>
<div class="a" style="left:6px;top:495.6px;width:1.1px;height:0.9px;background:#777;"></div>
<div class="a" style="left:4.8px;top:503.1px;width:3.4px;height:0.9px;background:#666;"></div>
<div class="a" style="left:6px;top:511.1px;width:1.1px;height:0.9px;background:#777;"></div>
<div class="t" style="left:2.9px;top:519.2px;font-size:7px;color:#555;transform:translate(0,-50%) rotate(-90deg);transform-origin:50% 50%;width:7px;text-align:center">11</div>
<div class="a" style="left:6px;top:526.6px;width:1.1px;height:0.9px;background:#777;"></div>
<div class="a" style="left:4.8px;top:534.1px;width:3.4px;height:0.9px;background:#666;"></div>
<div class="a" style="left:1014.5px;top:101px;width:9.5px;height:439px;background:#e6e6e6;"></div>
<div class="a" style="left:1015px;top:103px;width:9px;height:9.2px;background:#fff;"></div>
<svg class="a" style="left:1016.8px;top:105.5px" width="6" height="4" viewBox="0 0 6 4"><path d="M0 3.5 L3 0.3 L6 3.5 Z" fill="#555"/></svg>
<div class="a" style="left:1015px;top:112.2px;width:9px;height:417.2px;background:#dcdcdc;"></div>
<div class="a" style="left:1015.5px;top:113.6px;width:8.5px;height:190.8px;background:#f9f9f9;border:1px solid #c9c9c9"></div>
<div class="a" style="left:1015px;top:529.4px;width:9px;height:10px;background:#fff;"></div>
<svg class="a" style="left:1016.8px;top:533px" width="6" height="4" viewBox="0 0 6 4"><path d="M0 0.3 L3 3.5 L6 0.3 Z" fill="#555"/></svg>
<div class="a" style="left:0px;top:540px;width:1024px;height:15.5px;background:#f2f2f2;border-top:1px solid #e2e2e2"></div>
<div class="t" style="left:2.0px;top:544.88px;font-size:7.59px;color:#444;transform:scaleX(0.9091);transform-origin:0 0;">Страница 1 из 1</div>
<div class="t" style="left:64.0px;top:544.88px;font-size:7.59px;color:#444;transform:scaleX(0.9091);transform-origin:0 0;">Число слов: 92</div>
<svg class="a" style="left:122.5px;top:542.5px" width="10" height="9" viewBox="0 0 10 9"><path d="M0.5 0.5 H5 V8.5 H0.5 Z M5 0.5 H8.5 V4" fill="none" stroke="#666" stroke-width="0.8"/><path d="M5.5 6 L7 7.8 L9.5 4.5" fill="none" stroke="#666" stroke-width="0.8"/></svg>
<div class="t" style="left:141.0px;top:544.78px;font-size:7.70px;color:#444;transform:scaleX(0.9091);transform-origin:0 0;">русский</div>
<svg class="a" style="left:849.5px;top:543px" width="11" height="9" viewBox="0 0 11 9"><path d="M0.5 1 H4.8 V8.3 H0.5 Z M5.5 1 H9.8 V8.3 H5.5 Z" fill="none" stroke="#777" stroke-width="0.8"/><path d="M1.5 3 H4 M1.5 5 H4 M6.5 3 H9 M6.5 5 H9" stroke="#999" stroke-width="0.6"/></svg>
<div class="a" style="left:867px;top:540.7px;width:21.5px;height:14.3px;background:#c8c8c8;"></div>
<svg class="a" style="left:873.5px;top:543px" width="9" height="9" viewBox="0 0 9 9"><rect x="0.5" y="0.5" width="8" height="8" fill="#d8d8d8" stroke="#777" stroke-width="0.8"/><path d="M0.5 2.5 H8.5" stroke="#777" stroke-width="0.8"/></svg>
<svg class="a" style="left:896px;top:543px" width="10" height="10" viewBox="0 0 10 10"><rect x="0.5" y="0.5" width="7" height="8" fill="none" stroke="#777" stroke-width="0.8"/><path d="M1.8 2.5 H6 M1.8 4.5 H4" stroke="#999" stroke-width="0.6"/><circle cx="7.5" cy="7.5" r="2.2" fill="#f3f3f3" stroke="#555" stroke-width="0.8"/></svg>
<div class="a" style="left:913.7px;top:546.8px;width:5.3px;height:1.1px;background:#555;"></div>
<div class="a" style="left:921px;top:547.2px;width:66px;height:0.8px;background:#b0b0b0;"></div>
<div class="a" style="left:955px;top:543.2px;width:3.6px;height:8.8px;background:#666;"></div>
<div class="a" style="left:990px;top:546.8px;width:5.5px;height:1.1px;background:#555;"></div>
<div class="a" style="left:992.2px;top:544.6px;width:1.1px;height:5.5px;background:#555;"></div>
<div class="t" style="left:1002.6px;top:545.35px;font-size:7.26px;color:#555;transform:scaleX(0.9091);transform-origin:0 0;">122 %</div>
<div class="a" style="left:0px;top:555.5px;width:1024px;height:18.5px;background:#234769;"></div>
<svg class="a" style="left:3.8px;top:560.3px" width="12" height="12" viewBox="0 0 12 12"><path d="M0 1.6 L5.2 0.9 V5.5 H0 Z M5.9 0.8 L11.4 0 V5.5 H5.9 Z M0 6.2 H5.2 V10.8 L0 10.1 Z M5.9 6.2 H11.4 V11.5 L5.9 10.8 Z" fill="#fff"/></svg>
<svg class="a" style="left:27.5px;top:559.5px" width="12" height="12" viewBox="0 0 12 12"><circle cx="7.5" cy="4.3" r="3.3" fill="none" stroke="#fff" stroke-width="1"/><path d="M5.2 6.6 L1 10.8" stroke="#fff" stroke-width="1.1"/></svg>
<svg class="a" style="left:52px;top:561px" width="12" height="11" viewBox="0 0 12 11"><rect x="1.5" y="1.5" width="6" height="7" fill="none" stroke="#fff" stroke-width="0.9"/><path d="M0 0.5 H9 M0 9.5 H9" stroke="#fff" stroke-width="0.9"/><path d="M11 0 V2 M11 4 V6 M11 8 V10" stroke="#fff" stroke-width="1"/></svg>
<svg class="a" style="left:81.8px;top:560px" width="11" height="11" viewBox="0 0 11 11"><circle cx="5.5" cy="5.5" r="5.4" fill="#8a4ee0"/><circle cx="5.5" cy="5.5" r="3.6" fill="#b07cf5"/><path d="M3.2 7 L5.5 3 L7.8 7 Z" fill="#fff"/></svg>
<svg class="a" style="left:112.5px;top:560px" width="11" height="11" viewBox="0 0 11 11"><circle cx="5.3" cy="5.5" r="5.2" fill="#fff"/><path d="M3 2.5 L5.3 5.5 L7.6 2.5 M5.3 5.5 V8.8" stroke="#e31b1b" stroke-width="1.5" fill="none"/></svg>
<div class="t" style="left:125.0px;top:562.04px;font-size:8.58px;color:#fff;transform:scaleX(0.9091);transform-origin:0 0;">Психол. общ_УК: Са...</div>
<svg class="a" style="left:221.5px;top:558.5px" width="11" height="11" viewBox="0 0 11 11"><circle cx="5.5" cy="5.5" r="5.2" fill="#db4437"/><path d="M5.5 5.5 L10.2 3.2 A5.2 5.2 0 0 1 3 10 Z" fill="#0f9d58"/><path d="M5.5 5.5 L3 10 A5.2 5.2 0 0 1 0.6 3.6 Z" fill="#f4b400"/><circle cx="5.5" cy="5.5" r="2.3" fill="#4285f4" stroke="#fff" stroke-width="0.8"/></svg>
<svg class="a" style="left:246.5px;top:559px" width="12" height="11" viewBox="0 0 12 11"><rect x="4" y="0.5" width="7.5" height="9.5" fill="#f0f0f0"/><rect x="0" y="1.5" width="8" height="8.5" fill="#d24726"/><text x="1.5" y="8.5" font-family="Liberation Sans" font-size="7" font-weight="bold" fill="#fff">P</text></svg>
<div class="t" style="left:260.0px;top:562.04px;font-size:8.58px;color:#fff;transform:scaleX(0.9091);transform-origin:0 0;">Презентация Micros...</div>
<svg class="a" style="left:354.5px;top:559px" width="12" height="11" viewBox="0 0 12 11"><rect x="4" y="0.5" width="7.5" height="9.5" fill="#f0f0f0"/><rect x="0" y="1.5" width="8" height="8.5" fill="#2b579a"/><text x="0.6" y="8.5" font-family="Liberation Sans" font-size="6.5" font-weight="bold" fill="#fff">W</text></svg>
<div class="t" style="left:368.0px;top:562.04px;font-size:8.58px;color:#fff;transform:scaleX(0.9091);transform-origin:0 0;">Рекомендации по о...</div>
<div class="a" style="left:456.5px;top:555.5px;width:105.3px;height:18.5px;background:#41607f;"></div>
<svg class="a" style="left:461.5px;top:559px" width="12" height="11" viewBox="0 0 12 11"><rect x="4" y="0.5" width="7.5" height="9.5" fill="#f0f0f0"/><rect x="0" y="1.5" width="8" height="8.5" fill="#2b579a"/><text x="0.6" y="8.5" font-family="Liberation Sans" font-size="6.5" font-weight="bold" fill="#fff">W</text></svg>
<div class="t" style="left:474.0px;top:562.04px;font-size:8.58px;color:#fff;transform:scaleX(0.9091);transform-origin:0 0;">Приложение 1.docx...</div>
<svg class="a" style="left:569.5px;top:559.5px" width="11" height="10" viewBox="0 0 11 10"><rect x="0.5" y="0.5" width="10" height="8.5" fill="#cfe0ef" stroke="#fff" stroke-width="0.8"/><path d="M1.5 7.5 L4.5 4 L7 6 L9.5 3.5 V8 H1.5 Z" fill="#6a9fcf"/></svg>
<div class="t" style="left:582.0px;top:562.04px;font-size:8.58px;color:#fff;transform:scaleX(0.9091);transform-origin:0 0;">54.png - Средство п...</div>
<svg class="a" style="left:894.5px;top:562.5px" width="9" height="6" viewBox="0 0 9 6"><path d="M0.5 5.3 L4.5 1 L8.5 5.3" stroke="#fff" stroke-width="1" fill="none"/></svg>
<svg class="a" style="left:909.5px;top:561px" width="12" height="10" viewBox="0 0 12 10"><rect x="2.5" y="0.5" width="9" height="6.5" fill="none" stroke="#fff" stroke-width="0.9"/><rect x="0.5" y="2" width="3" height="7.5" fill="#234769" stroke="#fff" stroke-width="0.9"/><path d="M5 9.5 H9 M7 7 V9.5" stroke="#fff" stroke-width="0.9"/></svg>
<svg class="a" style="left:925px;top:561px" width="12" height="10" viewBox="0 0 12 10"><path d="M0.5 3.5 H2.5 L5 1 V9 L2.5 6.5 H0.5 Z" fill="none" stroke="#fff" stroke-width="0.9"/><path d="M7 3.5 Q8 5 7 6.5 M9 2 Q11 5 9 8" stroke="#fff" stroke-width="0.9" fill="none"/></svg>
<div class="t" style="left:944.7px;top:563.15px;font-size:7.26px;color:#fff;transform:scaleX(0.9091);transform-origin:0 0;">РУС</div>
<div class="t" style="left:970.0px;top:562.60px;font-size:7.92px;color:#fff;transform:scaleX(0.9091);transform-origin:0 0;">1:22</div>
<svg class="a" style="left:998px;top:561px" width="13" height="12" viewBox="0 0 13 12"><path d="M0.5 0.5 H11.5 V8.5 H7 L6 10.5 L5 8.5 H0.5 Z" fill="#fff"/><path d="M2.5 2.5 H9.5 M2.5 4.5 H9.5 M2.5 6.5 H7" stroke="#9aa" stroke-width="0.7"/></svg>
</body></html>
